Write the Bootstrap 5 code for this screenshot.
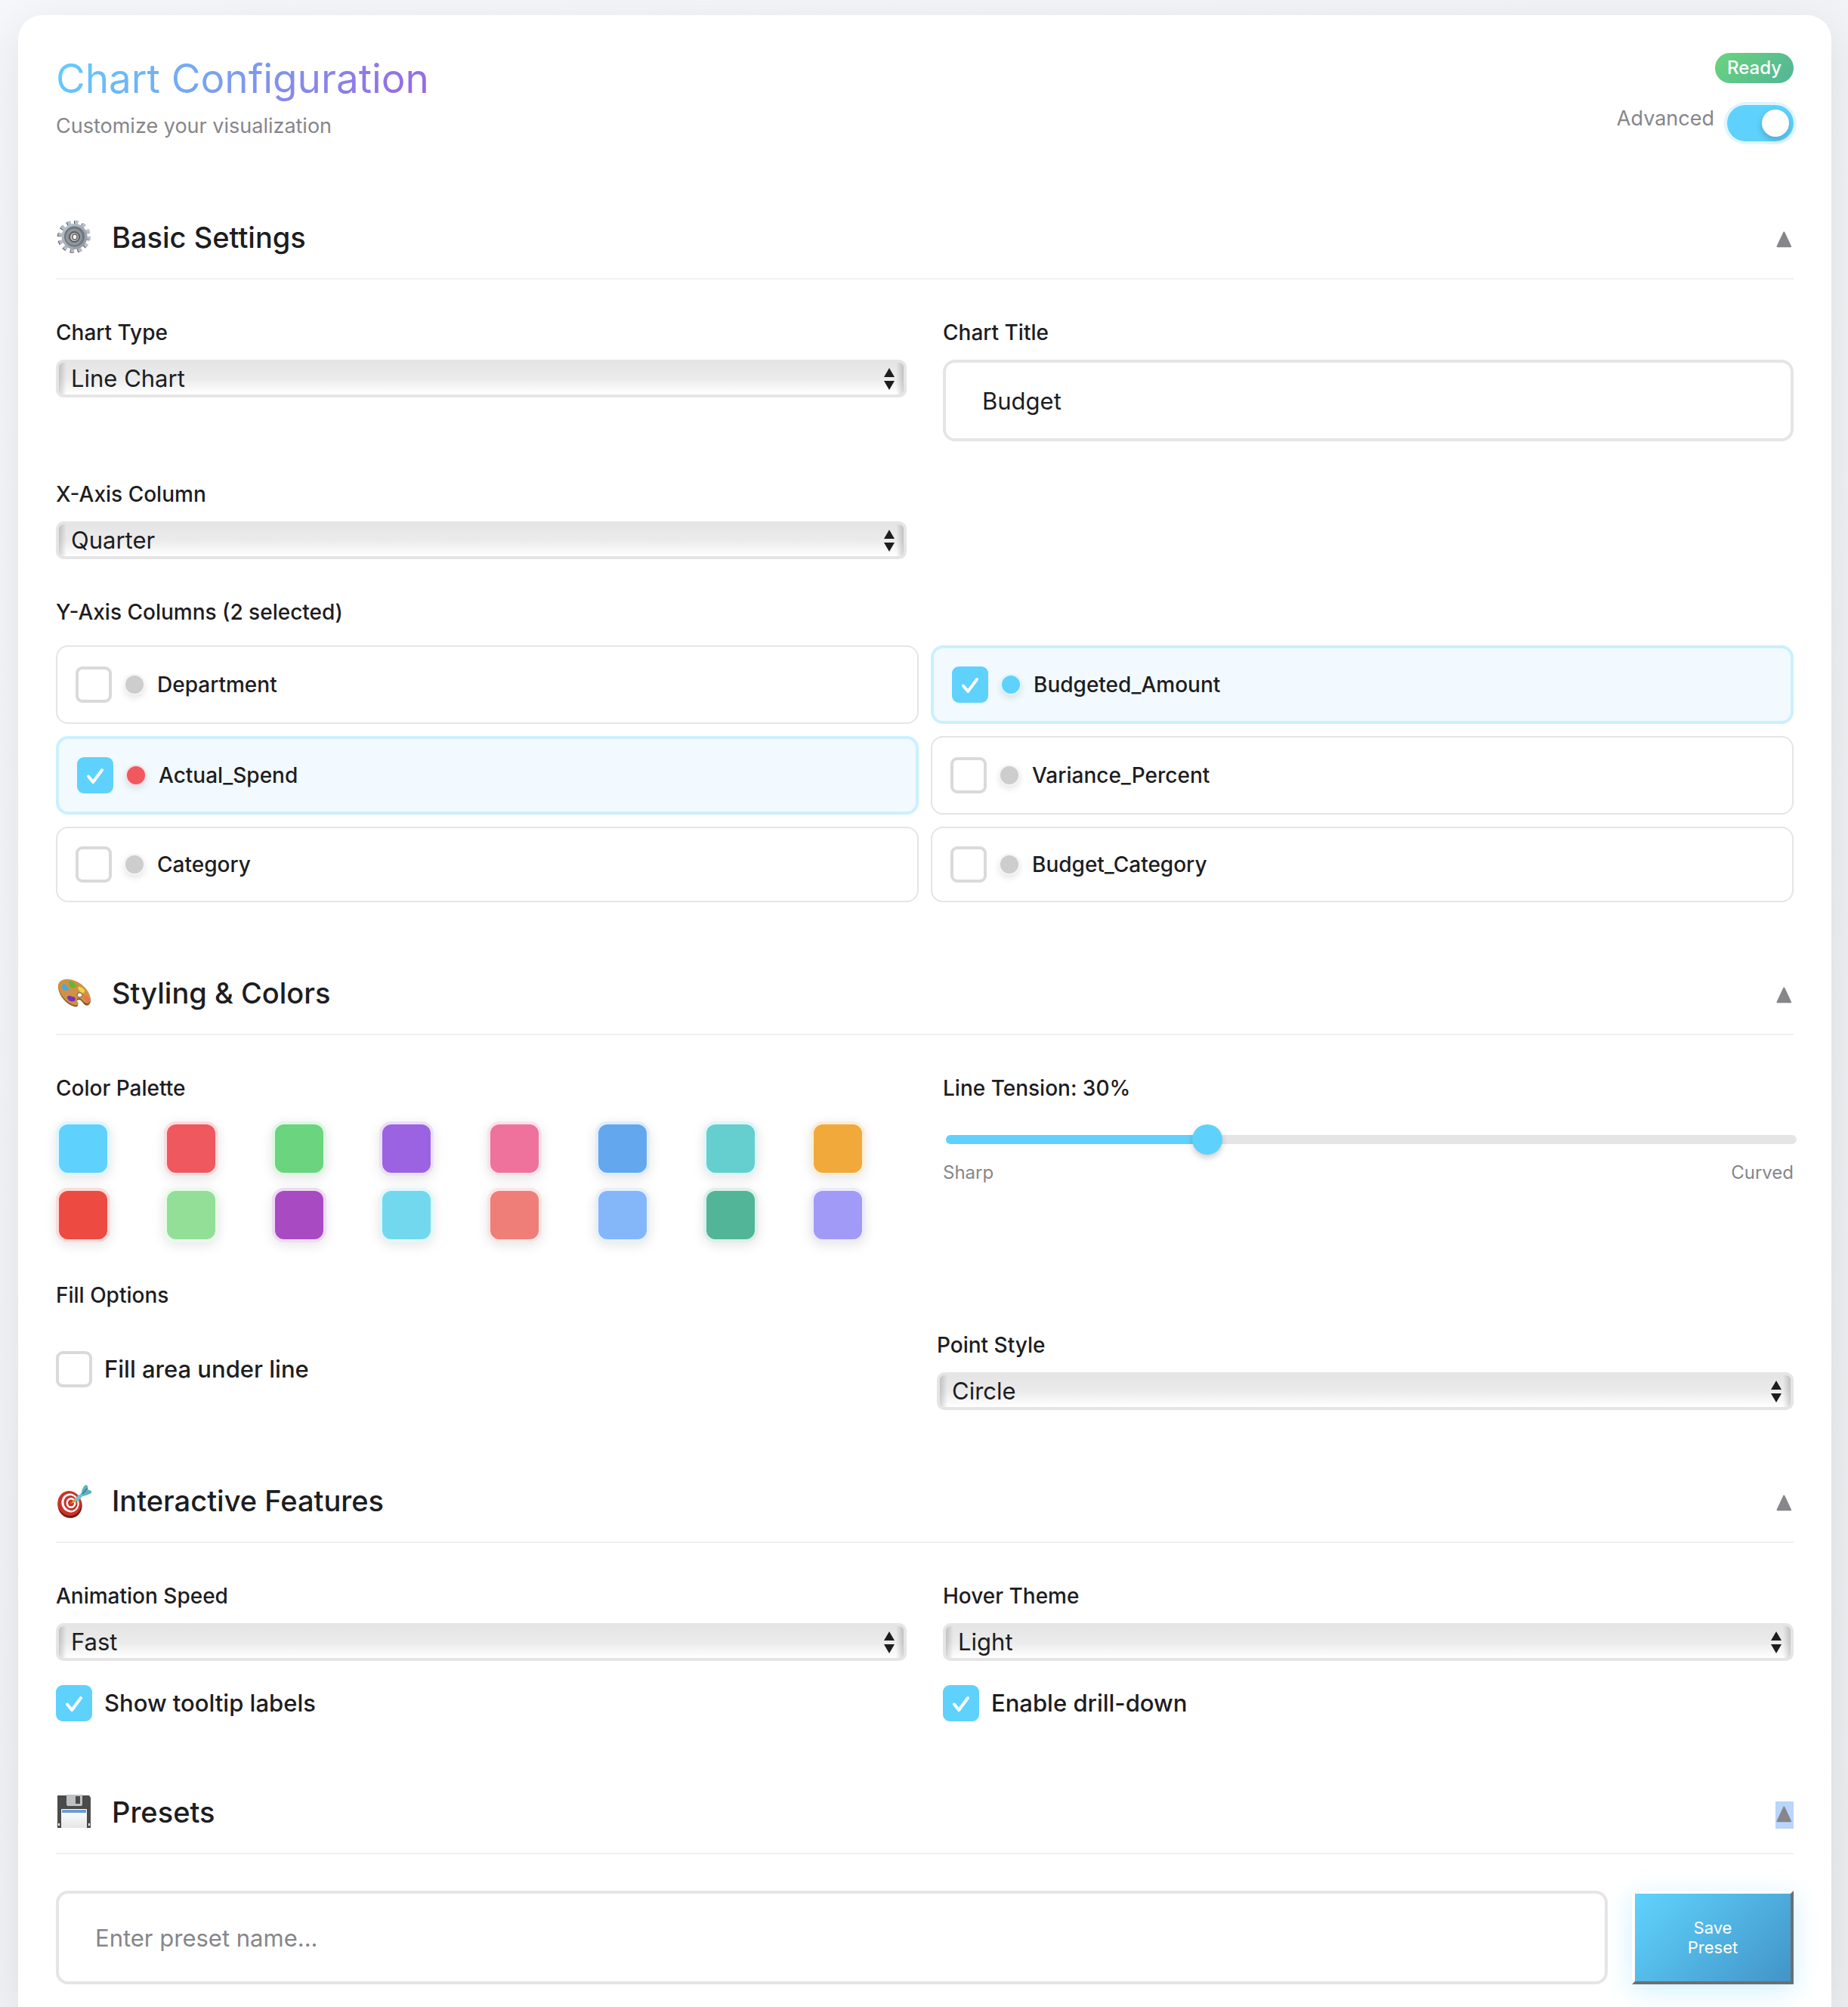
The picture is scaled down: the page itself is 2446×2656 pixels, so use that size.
<!DOCTYPE html>
<html lang="en">
<head>
<meta charset="utf-8">
<meta name="viewport" content="width=device-width, initial-scale=1">
<title>Chart Configuration</title>
<link href="https://cdn.jsdelivr.net/npm/bootstrap@5.3.0/dist/css/bootstrap.min.css" rel="stylesheet">
<style>
:root{--accent:#5fd1fd;--ink:#1d1d1f;--muted:#86868b;--line:#e5e5e6}
body{font-family:Inter,"Liberation Sans",sans-serif;font-size:27px;line-height:42px;color:var(--ink);background:linear-gradient(135deg,#f5f7fa 0%,#edeef0 100%)}
.page-shell{padding:20px 22px 0 24px}
.config-panel{background:#fff;border-radius:32px 32px 0 0;padding:50px 50px 16px;box-shadow:0 16px 64px rgba(0,0,0,.09)}
.panel-head{margin-bottom:6px}
.panel-title{font-size:53px;line-height:68px;font-weight:400;margin:0;background:linear-gradient(135deg,var(--accent),#9b63e1);-webkit-background-clip:text;background-clip:text;color:transparent}
.panel-sub{margin:8px 0 0;color:var(--muted)}
.status-pill{font-size:24px;line-height:40px;font-weight:500;color:#fff;padding:0 16px;border-radius:20px;background:linear-gradient(135deg,#6ad47e,#52b597)}
.adv-row{margin-top:26px;gap:17px;color:var(--muted)}
.adv-switch{appearance:none;width:88px;height:48px;margin:3px 0 0;border-radius:24px;background:var(--accent);box-shadow:0 0 0 4px rgba(95,209,253,.2)}
.adv-switch::before{content:"";display:block;width:36px;height:36px;margin:6px 0 0 6px;border-radius:50%;background:#fff;box-shadow:0 4px 8px rgba(0,0,0,.2)}
.adv-switch:checked::before{margin-left:46px}
.cfg-section{padding-top:91px}
.section-head{padding-bottom:25px;border-bottom:2px solid #f0f0f1;margin-bottom:48px}
.section-head h2{font-size:38px;line-height:58px;font-weight:500;margin:0}
.section-head .emo{width:48px;height:48px;flex:none}
.section-name{gap:26px}
.fold-btn{width:24px;height:36px;margin:8px 0 0;padding:0;border:0;background:none;display:block}
.fold-btn svg{display:block}
.fold-btn.is-selected{background:#b8d5fb}
.cfg-row{--bs-gutter-x:48px;--bs-gutter-y:48px}
.cfg-row-tight{--bs-gutter-x:32px}
.fld{display:block;font-size:28px;line-height:44px;font-weight:500;margin-bottom:14px}
.fld-wide{margin-bottom:22px}
.pick{appearance:none;display:block;width:100%;height:50px;padding:0 40px 0 16px;font-size:31px;color:var(--ink);border:4px solid var(--line);border-radius:10px;background:
 url("data:image/svg+xml,%3Csvg xmlns='http://www.w3.org/2000/svg' viewBox='0 0 14 29'%3E%3Cpath d='M7 0l7 12H0zM7 29L0 17h14z' fill='%231d1d1f'/%3E%3C/svg%3E") no-repeat right 12px top 7px/14px 29px,
 linear-gradient(90deg,rgba(0,0,0,.17),rgba(0,0,0,0)) no-repeat left/10px 100%,
 linear-gradient(270deg,rgba(0,0,0,.17),rgba(0,0,0,0)) no-repeat right/10px 100%,
 linear-gradient(#e5e5e5,#ebebeb 50%,#fff)}
.txt{display:block;width:100%;height:108px;padding:0 48px;font-size:31px;color:var(--ink);background:#fff;border:4px solid var(--line);border-radius:16px}
.txt::placeholder{color:var(--muted);opacity:1}
.tick{appearance:none;flex:none;width:48px;height:48px;margin:0;border:4px solid #d9dadc;border-radius:9px;background:#fff}
.tick:checked{border-color:var(--accent);background:var(--accent) url("data:image/svg+xml,%3Csvg xmlns='http://www.w3.org/2000/svg' viewBox='0 0 48 48'%3E%3Cpath d='M15 25.5l6.200 7.500L33 17' fill='none' stroke='%23fff' stroke-width='4' stroke-linecap='round' stroke-linejoin='round'/%3E%3C/svg%3E") center/48px 48px no-repeat;background-origin:border-box}
.axis-grid{display:grid;grid-template-columns:1fr 1fr;gap:16px}
.axis-item{display:flex;align-items:center;gap:16px;padding:24px;border:2px solid var(--line);border-radius:16px;font-size:28px;font-weight:500}
.axis-item.is-on{border:4px solid #cbf0fe;background:#f2faff}
.dot{flex:none;width:28px;height:28px;border-radius:50%;border:2px solid rgba(255,255,255,.8);background:var(--c,#cdcdcd);box-shadow:0 4px 8px rgba(0,0,0,.1)}
.palette{display:grid;grid-template-columns:repeat(8,1fr);gap:16px}
.swatch{width:72px;height:72px;padding:0;border:4px solid rgba(255,255,255,.8);border-radius:16px;background:var(--c);background-origin:border-box;box-shadow:0 4px 16px rgba(0,0,0,.1)}
.slide{appearance:none;display:block;width:100%;height:40px;margin:26px 0 7px 4px;padding:0;background:none}
.slide::-webkit-slider-runnable-track{height:12px;border-radius:6px;background:linear-gradient(90deg,var(--accent) var(--fill),#e5e5e5 var(--fill))}
.slide::-webkit-slider-thumb{appearance:none;width:40px;height:40px;margin-top:-14px;border-radius:50%;background:var(--accent);box-shadow:0 4px 8px rgba(0,0,0,.2)}
.slide-ends{font-size:24px;line-height:34px;color:var(--muted)}
.opt{display:flex;align-items:center;gap:16px;font-size:31px;font-weight:500}
.opt-below{margin-top:32px}
.preset-row{gap:32px}
.txt-tall{height:124px}
.save-btn{flex:none;width:214px;padding:0 60px;font-size:22px;line-height:26px;color:#fff;border:4px solid;border-color:#fff #6e6e70 #6e6e70 #fff;background:linear-gradient(135deg,#60d3fd,#4294c7);box-shadow:0 8px 32px rgba(95,209,253,.3)}
</style>
<script src="https://cdn.jsdelivr.net/npm/bootstrap@5.3.0/dist/js/bootstrap.bundle.min.js"></script>
</head>
<body>
<svg width="0" height="0" class="position-absolute" aria-hidden="true">
  <symbol id="fold" viewBox="0 0 24 36"><path d="M11.300 7.500L2.500 26.200h17.600z" fill="#86868b" stroke="#86868b" stroke-width="2" stroke-linejoin="round"/></symbol>
</svg>
<div class="page-shell min-vh-100 d-flex flex-column">
<main class="config-panel flex-grow-1">
  <header class="panel-head d-flex justify-content-between align-items-start">
    <div>
      <h1 class="panel-title">Chart Configuration</h1>
      <p class="panel-sub">Customize your visualization</p>
    </div>
    <div class="d-flex flex-column align-items-end">
      <span class="status-pill">Ready</span>
      <div class="adv-row d-flex align-items-start">
        <label for="advanced">Advanced</label>
        <input class="adv-switch" type="checkbox" role="switch" id="advanced" checked>
      </div>
    </div>
  </header>

  <section class="cfg-section">
    <div class="section-head d-flex justify-content-between align-items-center">
      <div class="section-name d-flex align-items-center">
        <svg class="emo" viewBox="0 0 48 48" aria-hidden="true">
          <defs><linearGradient id="gm" x1="0" y1="0" x2="1" y2="1"><stop offset="0" stop-color="#bcc5d0"/><stop offset="1" stop-color="#8d939b"/></linearGradient></defs>
          <circle cx="23.500" cy="23.500" r="19" fill="none" stroke="#5b5148" stroke-width="5" stroke-dasharray="4.600 5.350"/>
          <circle cx="24.500" cy="23" r="19" fill="none" stroke="#b5bfcb" stroke-width="5" stroke-dasharray="4.600 5.350"/>
          <circle cx="24.500" cy="23" r="17" fill="url(#gm)"/>
          <circle cx="24.500" cy="23" r="13.500" fill="#6f757c"/>
          <circle cx="24" cy="23.500" r="11" fill="#8f959c"/>
          <circle cx="24.500" cy="23.500" r="6.500" fill="#c3c8ce" stroke="#585d63" stroke-width="2"/>
          <ellipse cx="25" cy="23.500" rx="3" ry="3.600" fill="#fff" stroke="#6b6058" stroke-width="1.500"/>
        </svg>
        <h2>Basic Settings</h2>
      </div>
      <button type="button" class="fold-btn" aria-label="Collapse Basic Settings"><svg width="24" height="36"><use href="#fold"/></svg></button>
    </div>
    <div class="row cfg-row">
      <div class="col-6">
        <label class="fld" for="chartType">Chart Type</label>
        <select class="pick" id="chartType"><option>Line Chart</option></select>
      </div>
      <div class="col-6">
        <label class="fld" for="chartTitle">Chart Title</label>
        <input class="txt" type="text" id="chartTitle" value="Budget">
      </div>
      <div class="col-6">
        <label class="fld" for="xAxis">X-Axis Column</label>
        <select class="pick" id="xAxis"><option>Quarter</option></select>
      </div>
      <div class="col-12">
        <div class="fld fld-wide" id="yAxisLabel">Y-Axis Columns (2 selected)</div>
        <div class="axis-grid" role="group" aria-labelledby="yAxisLabel">
          <label class="axis-item"><input class="tick" type="checkbox"><span class="dot"></span>Department</label>
          <label class="axis-item is-on"><input class="tick" type="checkbox" checked><span class="dot" style="--c:#5fd1fd"></span>Budgeted_Amount</label>
          <label class="axis-item is-on"><input class="tick" type="checkbox" checked><span class="dot" style="--c:#ee585e"></span>Actual_Spend</label>
          <label class="axis-item"><input class="tick" type="checkbox"><span class="dot"></span>Variance_Percent</label>
          <label class="axis-item"><input class="tick" type="checkbox"><span class="dot"></span>Category</label>
          <label class="axis-item"><input class="tick" type="checkbox"><span class="dot"></span>Budget_Category</label>
        </div>
      </div>
    </div>
  </section>

  <section class="cfg-section">
    <div class="section-head d-flex justify-content-between align-items-center">
      <div class="section-name d-flex align-items-center">
        <svg class="emo" viewBox="0 0 48 48" aria-hidden="true">
          <path d="M3 17C2 10 9 6 17 7c14 1 28 15 29 27 0 5-4 8-7 6-3-1-4-6-8-7-4 0-3 3-2 5 1 4-1 5-5 4C14 39 4 28 3 17z" fill="#8a5a22"/>
          <path d="M3 15C3 9 9 5 17 6c14 1 28 14 29 26 0 5-4 7-7 5-3-1-4-5-8-6-4 0-4 3-2 5 2 4-1 5-5 4C14 37 4 26 3 15z" fill="#cd9343"/>
          <path d="M28 27a3.500 3 0 1 0 7-.500 3.500 3 0 0 0-7 .5z" fill="#fff" stroke="#7b4d1c"/>
          <path d="M8 15c0-3 4-4 6-1s5 4 2 6-8 0-8-5z" fill="#49a9e0"/>
          <path d="M17 10c1-3 4-2 6 0s5 3 3 6-9 1-9-6z" fill="#62b832"/>
          <path d="M30 16c2-1 7 2 8 5s-3 4-5 2-5-5-3-7z" fill="#f3d64b"/>
          <path d="M38 27c2 0 7 4 7 7s-4 3-5 1-4-6-2-8z" fill="#ee6d5c"/>
          <path d="M15 29c3-3 5 0 8 0s4 5 1 6-9 0-9-6z" fill="#7a2fc0"/>
        </svg>
        <h2>Styling &amp; Colors</h2>
      </div>
      <button type="button" class="fold-btn" aria-label="Collapse Styling and Colors"><svg width="24" height="36"><use href="#fold"/></svg></button>
    </div>
    <div class="row cfg-row">
      <div class="col-6">
        <div class="fld fld-wide" id="paletteLabel">Color Palette</div>
        <div class="palette" role="group" aria-labelledby="paletteLabel">
          <button type="button" class="swatch" aria-label="Sky" style="--c:#5fd1fd"></button>
          <button type="button" class="swatch" aria-label="Coral" style="--c:#ee585e"></button>
          <button type="button" class="swatch" aria-label="Green" style="--c:#6ad47e"></button>
          <button type="button" class="swatch" aria-label="Violet" style="--c:#9b63e1"></button>
          <button type="button" class="swatch" aria-label="Pink" style="--c:#ef729c"></button>
          <button type="button" class="swatch" aria-label="Blue" style="--c:#63a7ee"></button>
          <button type="button" class="swatch" aria-label="Teal" style="--c:#65cfcf"></button>
          <button type="button" class="swatch" aria-label="Orange" style="--c:#f1a93b"></button>
          <button type="button" class="swatch" aria-label="Red" style="--c:#ed4a42"></button>
          <button type="button" class="swatch" aria-label="Mint" style="--c:#94df97"></button>
          <button type="button" class="swatch" aria-label="Purple" style="--c:#a84ac2"></button>
          <button type="button" class="swatch" aria-label="Aqua" style="--c:#72d8ee"></button>
          <button type="button" class="swatch" aria-label="Salmon" style="--c:#ef7e79"></button>
          <button type="button" class="swatch" aria-label="Light blue" style="--c:#84b6fa"></button>
          <button type="button" class="swatch" aria-label="Emerald" style="--c:#52b597"></button>
          <button type="button" class="swatch" aria-label="Lavender" style="--c:#a19af7"></button>
        </div>
      </div>
      <div class="col-6">
        <label class="fld m-0" for="tension">Line Tension: 30%</label>
        <input class="slide" type="range" id="tension" min="0" max="100" value="30" style="--fill:30%">
        <div class="slide-ends d-flex justify-content-between"><span>Sharp</span><span>Curved</span></div>
      </div>
      <div class="col-12">
        <div class="fld fld-wide">Fill Options</div>
        <div class="row cfg-row-tight align-items-center">
          <div class="col-6"><label class="opt"><input class="tick" type="checkbox">Fill area under line</label></div>
          <div class="col-6">
            <label class="fld" for="pointStyle">Point Style</label>
            <select class="pick" id="pointStyle"><option>Circle</option></select>
          </div>
        </div>
      </div>
    </div>
  </section>

  <section class="cfg-section">
    <div class="section-head d-flex justify-content-between align-items-center">
      <div class="section-name d-flex align-items-center">
        <svg class="emo" viewBox="0 0 48 48" aria-hidden="true">
          <ellipse cx="18.500" cy="30" rx="16" ry="17" fill="#7d1712" transform="rotate(-20 18.500 30)"/>
          <ellipse cx="18" cy="27.500" rx="15.500" ry="16.500" fill="#c8342b" transform="rotate(-20 18 27.500)"/>
          <ellipse cx="19" cy="27" rx="11.500" ry="12.500" fill="#fff" transform="rotate(-20 19 27)"/>
          <ellipse cx="19.500" cy="27" rx="9" ry="10" fill="#c8342b" transform="rotate(-20 19.500 27)"/>
          <ellipse cx="20" cy="27" rx="6.500" ry="7" fill="#fff"/>
          <ellipse cx="20" cy="27" rx="4" ry="4.500" fill="#c8342b"/>
          <path d="M19 28l7-8 4 3-7 4z" fill="#d9a12b"/>
          <path d="M25 21l12-10 2 3-10 11-4-1z" fill="#6cc7d6"/>
          <path d="M34 14c0-5 2-8 5-11l3 1v5l5 2v3c-4 2-8 3-11 4z" fill="#5fb3bd"/>
          <path d="M35 15L42 7" stroke="#2f7f8d" stroke-width="1.500"/>
        </svg>
        <h2>Interactive Features</h2>
      </div>
      <button type="button" class="fold-btn" aria-label="Collapse Interactive Features"><svg width="24" height="36"><use href="#fold"/></svg></button>
    </div>
    <div class="row cfg-row">
      <div class="col-6">
        <label class="fld" for="speed">Animation Speed</label>
        <select class="pick" id="speed"><option>Fast</option></select>
        <label class="opt opt-below"><input class="tick" type="checkbox" checked>Show tooltip labels</label>
      </div>
      <div class="col-6">
        <label class="fld" for="hoverTheme">Hover Theme</label>
        <select class="pick" id="hoverTheme"><option>Light</option></select>
        <label class="opt opt-below"><input class="tick" type="checkbox" checked>Enable drill-down</label>
      </div>
    </div>
  </section>

  <section class="cfg-section">
    <div class="section-head d-flex justify-content-between align-items-center">
      <div class="section-name d-flex align-items-center">
        <svg class="emo" viewBox="0 0 48 48" aria-hidden="true">
          <defs><linearGradient id="fl" x1="0" y1="0" x2="0" y2="1"><stop offset="0" stop-color="#fff"/><stop offset="1" stop-color="#e6e6e6"/></linearGradient></defs>
          <path d="M2 2h42l2 3v40H2z" fill="#4b4b4b"/>
          <path d="M14 1h21v12q0 3-2 3H16q-2 0-2-3z" fill="#bfc0c2"/>
          <rect x="26" y="3" width="6" height="10" fill="#4a4a4a"/>
          <path d="M7 21q0-1 1-1h32q1 0 1 1v24H7z" fill="url(#fl)"/>
          <rect x="8" y="21" width="32" height="4" fill="#6c9bd6"/>
          <rect x="3" y="39" width="2" height="3" fill="#fff"/><rect x="43" y="39" width="2" height="3" fill="#fff"/>
        </svg>
        <h2>Presets</h2>
      </div>
      <button type="button" class="fold-btn is-selected" aria-label="Collapse Presets"><svg width="24" height="36"><use href="#fold"/></svg></button>
    </div>
    <div class="preset-row d-flex align-items-stretch">
      <input class="txt txt-tall" type="text" aria-label="Preset name" placeholder="Enter preset name...">
      <button type="button" class="save-btn">Save Preset</button>
    </div>
  </section>
</main>
</div>
</body>
</html>
